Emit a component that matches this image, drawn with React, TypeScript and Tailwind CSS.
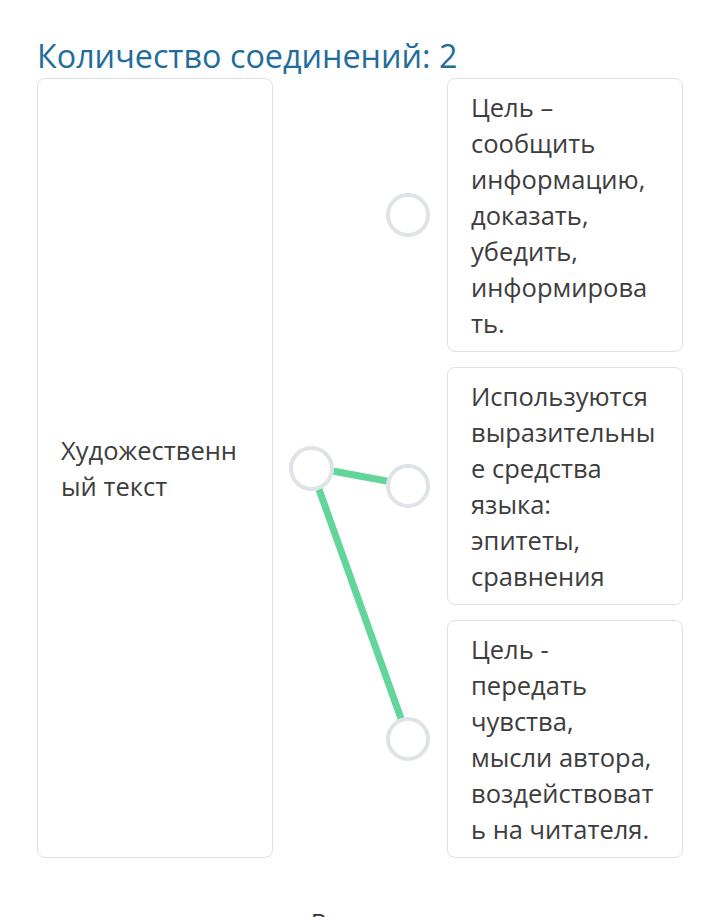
const rightItems: string[][] = [
  ['Цель –', 'сообщить', 'информацию,', 'доказать,', 'убедить,', 'информирова', 'ть.'],
  ['Используются', 'выразительны', 'е средства', 'языка:', 'эпитеты,', 'сравнения'],
  ['Цель -', 'передать', 'чувства,', 'мысли автора,', 'воздействоват', 'ь на читателя.'],
];

const rows = ['row-start-1', 'row-start-2', 'row-start-3'];

function Lines({ lines }: { lines: string[] }) {
  return (
    <>
      {lines.map((l, i) => (
        <span key={i} className="block whitespace-nowrap">
          {l}
        </span>
      ))}
    </>
  );
}

function Dot({ row }: { row: string }) {
  return (
    <div className={`${row} col-start-5 flex items-center justify-center`}>
      <div className="relative z-10 h-[44px] w-[44px] rounded-full border-[4px] border-[#dfe3e7] bg-white" />
    </div>
  );
}

export default function App() {
  return (
    <div className="min-h-screen bg-white px-[37px] pt-[34px] font-['Open_Sans',sans-serif] text-[#3d3d3d]">
      <h1 className="text-[32.3px] leading-[42px] text-[#1f6d9c]">Количество соединений: 2</h1>

      <div className="relative mt-[2px] grid grid-cols-[236px_16px_45px_52px_44px_17px_236px] gap-y-[15px]">
        <svg className="pointer-events-none absolute left-0 top-0" width="646" height="780">
          <line x1="274" y1="389" x2="371" y2="407" stroke="#62d59a" strokeWidth="7" />
          <line x1="274" y1="389" x2="371" y2="660" stroke="#62d59a" strokeWidth="7" />
        </svg>

        <div className="col-start-1 row-span-3 row-start-1 flex items-center rounded-lg border border-[#e0e0e0] px-[23px] text-[25.5px] leading-[36px]">
          <div>
            <Lines lines={['Художественн', 'ый текст']} />
          </div>
        </div>

        <div className="col-start-3 row-span-3 row-start-1 flex items-center justify-center">
          <div className="relative z-10 h-[45px] w-[45px] rounded-full border-[4px] border-[#dfe3e7] bg-white" />
        </div>

        {rows.map((r) => (
          <Dot key={r} row={r} />
        ))}

        {rightItems.map((lines, i) => (
          <div
            key={i}
            className={`col-start-7 ${rows[i]} rounded-lg border border-[#e0e0e0] px-[23px] py-[10px] text-[25.5px] leading-[36px]`}
          >
            <Lines lines={lines} />
          </div>
        ))}
      </div>

      <div className="mt-[46px] pl-[274px] text-[24px] leading-[36px] text-[#333]">Вернуться</div>
    </div>
  );
}
